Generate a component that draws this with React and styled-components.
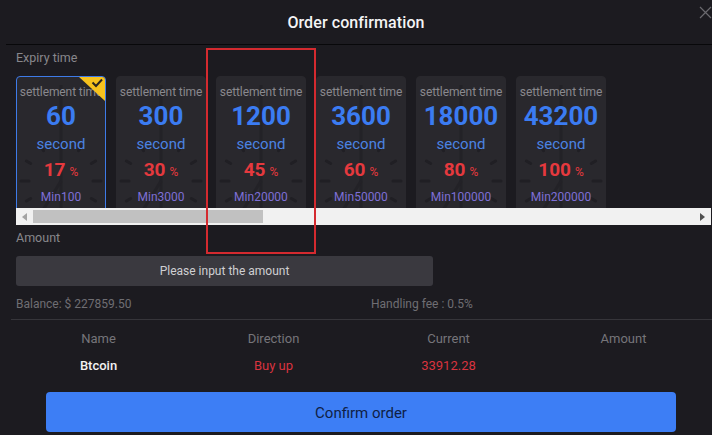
import React from "react";
import styled, { createGlobalStyle } from "styled-components";

const Global = createGlobalStyle`
  html, body { margin: 0; padding: 0; background: #1c1b20; }
  body { font-family: Roboto, "Noto Sans CJK SC", sans-serif; }
  * { box-sizing: border-box; }
`;

const Dialog = styled.div`
  position: relative;
  width: 712px;
  height: 435px;
  overflow: hidden;
  background: #1c1b20;
`;

const Header = styled.div`
  height: 44px;
  display: flex;
  align-items: center;
  justify-content: center;
`;

const Title = styled.h1`
  margin: 0;
  font-size: 16px;
  font-weight: 500;
  color: #f4f4f5;
  letter-spacing: 0.1px;
`;

const CloseButton = styled.button`
  position: absolute;
  top: 6px;
  right: 0px;
  width: 13px;
  height: 13px;
  padding: 0;
  border: 0;
  background: none;
  display: flex;
`;

const HeaderRule = styled.div`
  height: 1px;
  margin-left: 6px;
  background: #08080a;
`;

const Body = styled.div`
  padding-left: 16px;
  padding-right: 1px;
`;

const Label = styled.div`
  margin-top: ${(p) => p.$mt}px;
  font-size: 12.5px;
  line-height: 16px;
  color: #88878c;
`;

const Strip = styled.div`
  margin-top: 10px;
  height: 132px;
  display: flex;
  gap: 10px;
  overflow: hidden;
`;

const Card = styled.div`
  position: relative;
  flex: 0 0 90px;
  height: 140px;
  border-radius: 4px;
  background: #29282d;
  border: 1px solid ${(p) => (p.$active ? "#3e7be8" : "#29282d")};
  padding-top: 7px;
  display: flex;
  flex-direction: column;
  align-items: center;
  overflow: hidden;
`;

const ClockFace = styled.svg`
  position: absolute;
  left: 0;
  top: 0;
  width: 88px;
  height: 138px;
  pointer-events: none;
`;

const CardLine = styled.div`
  position: relative;
  white-space: nowrap;
`;

const SettleText = styled(CardLine)`
  font-size: 12px;
  line-height: 16px;
  color: #8a898e;
  letter-spacing: -0.1px;
`;

const Seconds = styled(CardLine)`
  font-size: 26px;
  line-height: 32px;
  font-weight: 700;
  color: #3b7cf2;
`;

const Unit = styled(CardLine)`
  font-size: 15px;
  line-height: 24px;
  color: #4b83e2;
`;

const Rate = styled(CardLine)`
  font-size: 19px;
  line-height: 28px;
  font-weight: 700;
  color: #e5393e;
  span {
    font-size: 12px;
    font-weight: 400;
    margin-left: 4px;
  }
`;

const MinText = styled(CardLine)`
  font-size: 12px;
  line-height: 22px;
  color: #7e6fd6;
`;

const Corner = styled.svg`
  position: absolute;
  top: -1px;
  right: -1px;
  width: 28px;
  height: 26px;
`;

const Track = styled.div`
  height: 17px;
  background: #f1f1f1;
  display: flex;
  align-items: center;
`;

const ArrowBtn = styled.div`
  flex: 0 0 17px;
  height: 17px;
  display: flex;
  align-items: center;
  justify-content: center;
`;

const ThumbArea = styled.div`
  flex: 1;
  height: 13px;
  display: flex;
`;

const Thumb = styled.div`
  height: 13px;
  background: #c1c1c1;
`;

const AmountInput = styled.input`
  display: block;
  margin-top: 10px;
  width: 417px;
  height: 30px;
  border: 0;
  border-radius: 3px;
  background: #3a393f;
  color: #e0e0e0;
  text-align: center;
  font-family: inherit;
  font-size: 12px;
  outline: none;
  &::placeholder { color: #cfcfd2; }
`;

const InfoRow = styled.div`
  margin-top: 10px;
  display: flex;
  font-size: 12px;
  line-height: 16px;
  color: #6f6e73;
`;

const InfoCell = styled.div`
  width: ${(p) => p.$w || "auto"};
`;

const Divider = styled.div`
  margin-top: 7px;
  margin-left: 11px;
  height: 1px;
  background: #36353a;
`;

const Table = styled.div`
  margin-left: 11px;
  width: 700px;
  display: grid;
  grid-template-columns: repeat(4, 1fr);
  row-gap: 7px;
  margin-top: 9px;
`;

const HeadCell = styled.div`
  text-align: center;
  font-size: 13px;
  line-height: 20px;
  color: #76757a;
`;

const Cell = styled.div`
  text-align: center;
  font-size: 13px;
  line-height: 20px;
  color: ${(p) => p.$color};
  font-weight: ${(p) => (p.$bold ? 500 : 400)};
`;

const Confirm = styled.button`
  display: block;
  margin: 16px 0 0 46px;
  width: 630px;
  height: 40px;
  border: 0;
  border-radius: 4px;
  background: #3d7ef5;
  color: #0f1f45;
  font-family: inherit;
  font-size: 15px;
  padding-top: 2px;
  cursor: pointer;
`;

const Annotation = styled.div`
  position: absolute;
  left: 206px;
  top: 48px;
  width: 110px;
  height: 206px;
  border: 2px solid #d42a2f;
  pointer-events: none;
`;

const options = [
  { s: 60, r: 17, min: 100 },
  { s: 300, r: 30, min: 3000 },
  { s: 1200, r: 45, min: 20000 },
  { s: 3600, r: 60, min: 50000 },
  { s: 18000, r: 80, min: 100000 },
  { s: 43200, r: 100, min: 200000 },
];

function Clock() {
  const cx = 44;
  const cy = 104;
  const ticks = [];
  for (let i = 0; i < 12; i++) {
    const a = (i * Math.PI) / 6;
    const r1 = 40;
    const r2 = i % 3 === 0 ? 32 : 35;
    ticks.push(
      <line
        key={i}
        x1={cx + Math.sin(a) * r1}
        y1={cy - Math.cos(a) * r1}
        x2={cx + Math.sin(a) * r2}
        y2={cy - Math.cos(a) * r2}
        stroke="#201f24"
        strokeWidth="3"
        strokeLinecap="round"
      />
    );
  }
  return (
    <ClockFace viewBox="0 0 88 138">
      {ticks}
      <line x1={cx} y1={cy + 30} x2={cx} y2={8} stroke="#232227" strokeWidth="3" />
      <line x1={cx} y1={cy} x2={cx - 26} y2={cy + 42} stroke="#232227" strokeWidth="3" />
    </ClockFace>
  );
}

export default function App() {
  return (
    <>
      <Global />
      <Dialog>
        <Header>
          <Title>Order confirmation</Title>
        </Header>
        <CloseButton aria-label="close">
          <svg width="13" height="13" viewBox="0 0 13 13">
            <path d="M1 1 L12 12 M12 1 L1 12" stroke="#6a696e" strokeWidth="1.2" />
          </svg>
        </CloseButton>
        <HeaderRule />
        <Body>
          <Label $mt={5}>Expiry time</Label>
          <Strip>
            {options.map((o, i) => (
              <Card key={o.s} $active={i === 0}>
                <Clock />
                <SettleText>settlement time</SettleText>
                <Seconds>{o.s}</Seconds>
                <Unit>second</Unit>
                <Rate>
                  {o.r}
                  <span>%</span>
                </Rate>
                <MinText>Min{o.min}</MinText>
                {i === 0 && (
                  <Corner viewBox="0 0 28 26">
                    <path d="M0 0 H24 Q28 0 28 4 V26 Z" fill="#f7c21d" />
                    <path d="M14.5 6.5 L18 10 L24 3.5" stroke="#2a2520" strokeWidth="2" fill="none" />
                  </Corner>
                )}
              </Card>
            ))}
          </Strip>
          <Track>
            <ArrowBtn>
              <svg width="5" height="8" viewBox="0 0 5 8">
                <path d="M5 0 L0 4 L5 8 Z" fill="#a3a3a3" />
              </svg>
            </ArrowBtn>
            <ThumbArea>
              <Thumb style={{ width: "230px" }} />
            </ThumbArea>
            <ArrowBtn>
              <svg width="5" height="8" viewBox="0 0 5 8">
                <path d="M0 0 L5 4 L0 8 Z" fill="#505050" />
              </svg>
            </ArrowBtn>
          </Track>
          <Label $mt={5}>Amount</Label>
          <AmountInput placeholder="Please input the amount" />
          <InfoRow>
            <InfoCell $w="355px">Balance: $ 227859.50</InfoCell>
            <InfoCell>Handling fee : 0.5%</InfoCell>
          </InfoRow>
        </Body>
        <Divider />
        <Table>
          <HeadCell>Name</HeadCell>
          <HeadCell>Direction</HeadCell>
          <HeadCell>Current</HeadCell>
          <HeadCell>Amount</HeadCell>
          <Cell $color="#f2f2f2" $bold>Btcoin</Cell>
          <Cell $color="#d8333f">Buy up</Cell>
          <Cell $color="#d8333f">33912.28</Cell>
          <Cell $color="#d8333f"></Cell>
        </Table>
        <Confirm>Confirm order</Confirm>
        <Annotation />
      </Dialog>
    </>
  );
}
